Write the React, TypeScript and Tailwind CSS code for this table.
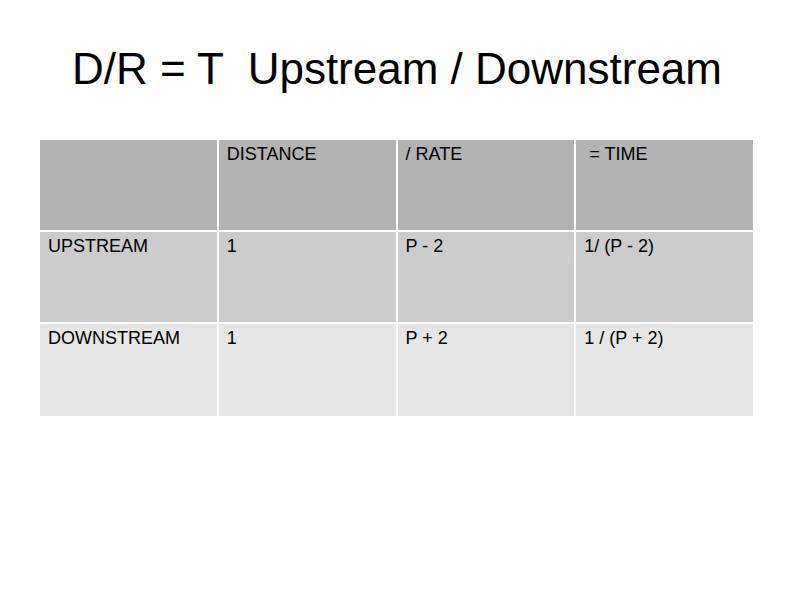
import React from "react";

const rows: { bg: string; h: string; cells: string[] }[] = [
  { bg: "bg-[#b3b3b3]", h: "h-[90px]", cells: ["", "DISTANCE", "/ RATE", " = TIME"] },
  { bg: "bg-[#cccccc]", h: "h-[90px]", cells: ["UPSTREAM", "1", "P - 2", "1/ (P - 2)"] },
  { bg: "bg-[#e6e6e6]", h: "h-[92px]", cells: ["DOWNSTREAM", "1", "P + 2", "1 / (P + 2)"] },
];

export default function App() {
  return (
    <div
      className="w-[794px] h-[595px] bg-white text-black overflow-hidden"
      style={{ fontFamily: '"Liberation Sans", Arial, sans-serif' }}
    >
      <h1 className="pt-[44px] text-center text-[44px] leading-[50px] font-normal whitespace-pre">
        {"D/R = T  Upstream / Downstream"}
      </h1>
      <div className="mt-[46px] ml-[40px] w-[713px] flex flex-col gap-[2px]">
        {rows.map((r, i) => (
          <div key={i} className="grid grid-cols-4 gap-[2px]">
            {r.cells.map((c, j) => (
              <div
                key={j}
                className={`${r.bg} ${r.h} pl-[8px] pt-[4px] text-[18px] leading-[21px] whitespace-pre`}
              >
                {c}
              </div>
            ))}
          </div>
        ))}
      </div>
    </div>
  );
}
